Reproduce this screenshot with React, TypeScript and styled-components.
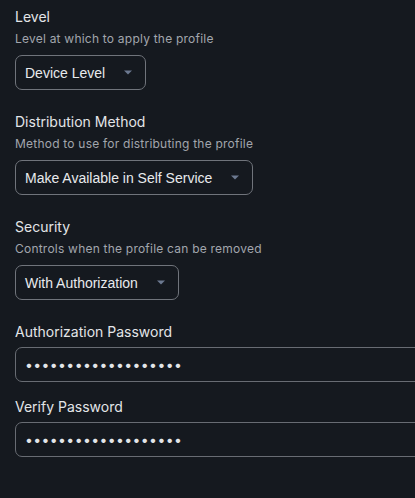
import React from 'react';
import styled, { createGlobalStyle } from 'styled-components';

const GlobalStyle = createGlobalStyle`
  html, body {
    margin: 0;
    padding: 0;
    background: #15191f;
  }
`;

const Page = styled.div`
  width: 100%;
  box-sizing: border-box;
  overflow: hidden;
  padding: 7px 0 0 15px;
  font-family: Inter, "Noto Sans", sans-serif;
  color: #e3e5e8;
`;

const Field = styled.div<{ $gap: number; $stretch?: boolean }>`
  display: flex;
  flex-direction: column;
  align-items: ${p => (p.$stretch ? 'stretch' : 'flex-start')};
  margin-bottom: ${p => p.$gap}px;
`;

const Label = styled.div`
  font-size: 14px;
  line-height: 20px;
  color: #e3e5e8;
`;

const Hint = styled.div`
  margin-top: 4px;
  font-size: 12px;
  line-height: 16px;
  color: #a2a6ad;
  letter-spacing: 0.22px;
`;

const SelectBox = styled.div`
  display: inline-flex;
  align-items: center;
  gap: 19px;
  box-sizing: border-box;
  height: 35px;
  margin-top: 8px;
  padding: 0 13px 0 9px;
  border: 1px solid #70747b;
  border-radius: 7px;
  font-family: "Liberation Sans", Arial, sans-serif;
  font-size: 14px;
  color: #e8eaed;
`;

const Caret = styled.svg`
  width: 8px;
  height: 5px;
  flex: none;
`;

const PasswordInput = styled.input`
  box-sizing: border-box;
  width: calc(100% + 20px);
  height: 35px;
  margin-top: 5px;
  padding: 0 9px;
  background: transparent;
  border: 1px solid #686c73;
  border-radius: 7px;
  font-family: Inter, "Noto Sans", sans-serif;
  font-size: 14px;
  letter-spacing: 0.4px;
  color: #e3e5e8;
  outline: none;
`;

const Select: React.FC<{ value: string }> = ({ value }) => (
  <SelectBox>
    <span>{value}</span>
    <Caret viewBox="0 0 8 5">
      <path d="M0 0.5 H8 L4 4.5 Z" fill="#6c7990" />
    </Caret>
  </SelectBox>
);

const App: React.FC = () => {
  const secret = '•'.repeat(19);
  return (
    <Page>
      <GlobalStyle />
      <Field $gap={22}>
        <Label>Level</Label>
        <Hint>Level at which to apply the profile</Hint>
        <Select value="Device Level" />
      </Field>
      <Field $gap={22}>
        <Label>Distribution Method</Label>
        <Hint>Method to use for distributing the profile</Hint>
        <Select value="Make Available in Self Service" />
      </Field>
      <Field $gap={22}>
        <Label>Security</Label>
        <Hint>Controls when the profile can be removed</Hint>
        <Select value="With Authorization" />
      </Field>
      <Field $gap={15} $stretch>
        <Label>Authorization Password</Label>
        <PasswordInput type="password" defaultValue={secret} readOnly />
      </Field>
      <Field $gap={0} $stretch>
        <Label>Verify Password</Label>
        <PasswordInput type="password" defaultValue={secret} readOnly />
      </Field>
    </Page>
  );
};

export default App;
